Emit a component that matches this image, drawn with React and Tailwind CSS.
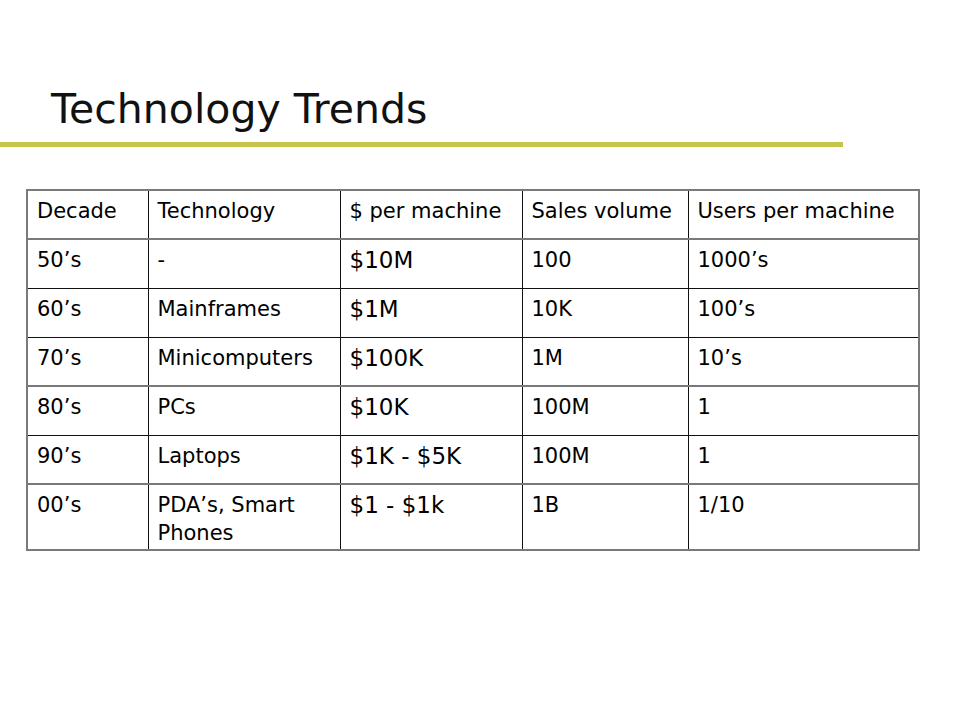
const rows = [
  ['50’s', '-', '$10M', '100', '1000’s'],
  ['60’s', 'Mainframes', '$1M', '10K', '100’s'],
  ['70’s', 'Minicomputers', '$100K', '1M', '10’s'],
  ['80’s', 'PCs', '$10K', '100M', '1'],
  ['90’s', 'Laptops', '$1K - $5K', '100M', '1'],
  ['00’s', 'PDA’s, Smart Phones', '$1 - $1k', '1B', '1/10'],
];

const headers = ['Decade', 'Technology', '$ per machine', 'Sales volume', 'Users per machine'];

// rows whose bottom rule looks grey and heavier in the slide
const greyRule = [true, false, false, true, false, true, true];

export default function App() {
  return (
    <div className="w-[960px] h-[720px] bg-white overflow-hidden font-['DejaVu_Sans',sans-serif] text-black">
      <h1 className="pt-[89px] pl-[51px] text-[41px] leading-[40px] font-normal text-[#111]">
        Technology Trends
      </h1>
      <div className="mt-[13px] h-[5px] w-[843px] bg-[#c5c54b]" />

      <table className="mt-[42px] ml-[26px] w-[892px] table-fixed border-collapse border-2 border-[#7a7a7a] text-[21px] leading-[28px]">
        <colgroup>
          <col className="w-[121px]" />
          <col className="w-[192px]" />
          <col className="w-[182px]" />
          <col className="w-[166px]" />
          <col className="w-[231px]" />
        </colgroup>
        <thead>
          <tr className="h-[49px] border-b-2 border-[#7a7a7a]">
            {headers.map((h, i) => (
              <td
                key={h}
                className={`align-top pl-[9px] pr-1 pt-[6px] whitespace-nowrap ${i > 0 ? 'border-l border-[#111]' : ''}`}
              >
                {h}
              </td>
            ))}
          </tr>
        </thead>
        <tbody>
          {rows.map((r, ri) => (
            <tr
              key={r[0]}
              className={`${ri === rows.length - 1 ? 'h-[66px]' : 'h-[49px]'} ${
                greyRule[ri + 1] ? 'border-b-2 border-[#7a7a7a]' : 'border-b border-[#111]'
              }`}
            >
              {r.map((c, ci) => (
                <td
                  key={ci}
                  className={`align-top pl-[9px] pr-2 pt-[6px] ${ci > 0 ? 'border-l border-[#111]' : ''} ${
                    ci === 2 ? 'text-[23px]' : ''
                  }`}
                >
                  {c}
                </td>
              ))}
            </tr>
          ))}
        </tbody>
      </table>
    </div>
  );
}
